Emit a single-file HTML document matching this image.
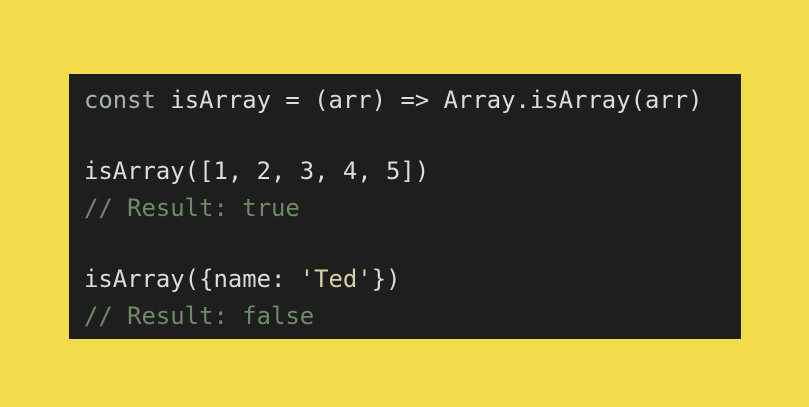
<!DOCTYPE html>
<html><head><style>
html,body{margin:0;padding:0;width:809px;height:407px;background:#f3dc4b;overflow:hidden}
.box{position:absolute;left:69px;top:74px;width:672px;height:265px;background:#1e1e1e}
.l{position:absolute;left:84px;font-family:"DejaVu Sans Mono","Liberation Mono",monospace;font-size:23.9px;line-height:30px;color:#dcdcdc;white-space:pre}
.k{color:#a7b0b0}.c{color:#6f8a69}.s{color:#d6d0a8}
</style></head><body>
<div class="box"></div>
<div class="l" style="top:85px"><span class="k">const</span> isArray = (arr) =&gt; Array.isArray(arr)</div>
<div class="l" style="top:156px">isArray([1, 2, 3, 4, 5])</div>
<div class="l c" style="top:193px">// Result: true</div>
<div class="l" style="top:264px">isArray({name: <span class="s">'Ted'</span>})</div>
<div class="l c" style="top:301px">// Result: false</div>
</body></html>
